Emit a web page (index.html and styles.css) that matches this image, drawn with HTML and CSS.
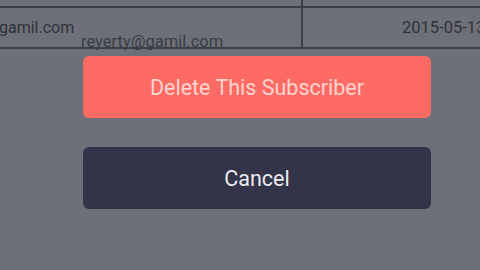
FILE: index.html
```html
<!DOCTYPE html>
<html>
<head>
<meta charset="utf-8">
<link rel="stylesheet" href="styles.css">
</head>
<body>
<div class="screen">
  <div class="table">
    <div class="row top">
      <div class="cell c1"></div>
      <div class="cell c2"></div>
    </div>
    <div class="row main">
      <div class="cell c1"><span class="email">gamil.com</span></div>
      <div class="cell c2"><span class="date">2015-05-13</span></div>
    </div>
  </div>
  <div class="ghost">reyerty@gamil.com</div>
  <div class="actions">
    <button class="btn delete">Delete This Subscriber</button>
    <button class="btn cancel">Cancel</button>
  </div>
</div>
</body>
</html>
```
FILE: styles.css
```css
html, body {
  margin: 0;
  padding: 0;
}
body {
  width: 480px;
  height: 270px;
  overflow: hidden;
  background: #6d7079;
  font-family: Roboto, "Liberation Sans", sans-serif;
}
.screen {
  position: relative;
  width: 480px;
  height: 270px;
  background: #6d7079;
}
.table {
  display: flex;
  flex-direction: column;
}
.row {
  display: flex;
}
.row.top {
  height: 6px;
  border-bottom: 2px solid #3d3f48;
}
.row.main {
  height: 39px;
  border-bottom: 2px solid #3d3f48;
}
.cell.c1 {
  width: 301px;
  border-right: 2px solid #3d3f48;
  position: relative;
  overflow: hidden;
}
.cell.c2 {
  flex: 1;
  overflow: hidden;
  white-space: nowrap;
}
.email {
  position: absolute;
  left: -1px;
  top: 10px;
  font-size: 16px;
  color: #30323a;
  white-space: nowrap;
}
.date {
  display: inline-block;
  margin-left: 99px;
  margin-top: 10px;
  font-size: 16.5px;
  color: #30323a;
}
.ghost {
  position: absolute;
  left: 81px;
  top: 32px;
  font-size: 16.5px;
  color: #3a3c45;
}
.actions {
  display: flex;
  flex-direction: column;
  gap: 29px;
  padding: 7px 0 0 83px;
}
.btn {
  width: 348px;
  height: 62px;
  border: none;
  border-radius: 6px;
  font-family: Roboto, "Liberation Sans", sans-serif;
  font-size: 21.5px;
  padding: 0;
}
.delete {
  background: #fe6b64;
  color: #fcd4cf;
}
.cancel {
  background: #33344a;
  color: #ebebf0;
}
```
